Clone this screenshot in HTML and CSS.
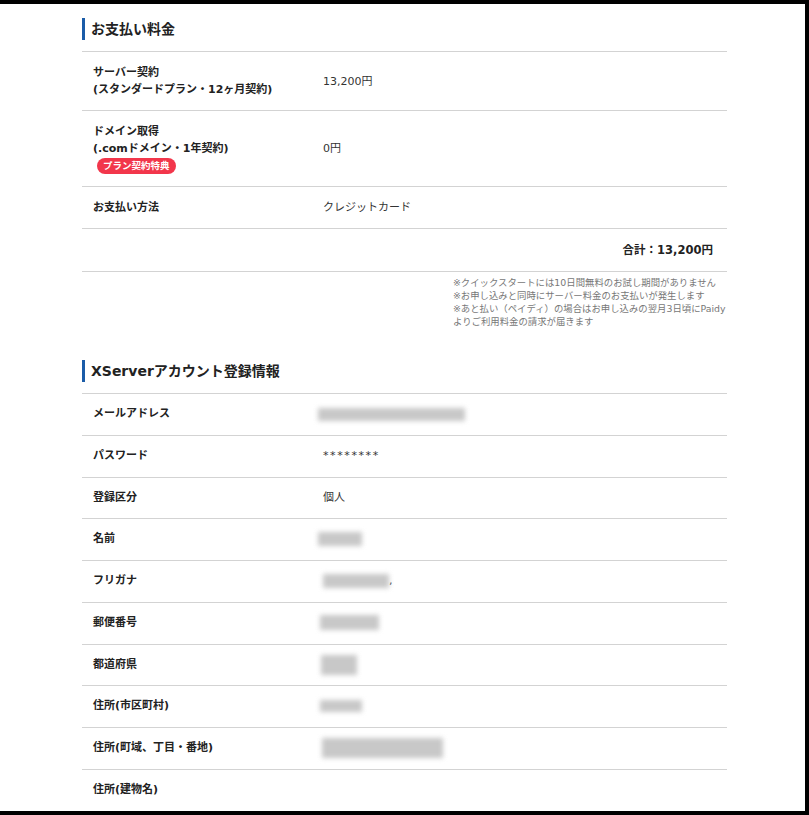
FILE: index.html
```html
<!DOCTYPE html>
<html lang="ja">
<head>
  <meta charset="UTF-8" />
  <title>お申し込み内容の確認</title>
  <link rel="stylesheet" href="styles.css">
</head>
<body>
  <div class="screen">
    <div class="content">

      <!-- お支払い料金 -->
      <h2 class="section-title">お支払い料金</h2>
      <div class="table">
        <div class="row">
          <div class="label">サーバー契約<br>(スタンダードプラン・12ヶ月契約)</div>
          <div class="value">13,200円</div>
        </div>
        <div class="row">
          <div class="label">ドメイン取得<br>(.comドメイン・1年契約)<br><span class="badge">プラン契約特典</span></div>
          <div class="value">0円</div>
        </div>
        <div class="row">
          <div class="label">お支払い方法</div>
          <div class="value">クレジットカード</div>
        </div>
        <div class="row total">
          <div class="total-text">合計：13,200円</div>
        </div>
      </div>
      <div class="notes">
        <p>※クイックスタートには10日間無料のお試し期間がありません</p>
        <p>※お申し込みと同時にサーバー料金のお支払いが発生します</p>
        <p>※あと払い（ペイディ）の場合はお申し込みの翌月3日頃にPaidy<br>よりご利用料金の請求が届きます</p>
      </div>

      <!-- アカウント情報 -->
      <h2 class="section-title second">XServerアカウント登録情報</h2>
      <div class="table account">
        <div class="row">
          <div class="label">メールアドレス</div>
          <div class="value"><span class="mask mask-email"></span></div>
        </div>
        <div class="row">
          <div class="label">パスワード</div>
          <div class="value secret">********</div>
        </div>
        <div class="row">
          <div class="label">登録区分</div>
          <div class="value">個人</div>
        </div>
        <div class="row">
          <div class="label">名前</div>
          <div class="value"><span class="mask mask-name"></span></div>
        </div>
        <div class="row">
          <div class="label">フリガナ</div>
          <div class="value"><span class="mask mask-kana"></span>,</div>
        </div>
        <div class="row">
          <div class="label">郵便番号</div>
          <div class="value"><span class="mask mask-zip"></span></div>
        </div>
        <div class="row">
          <div class="label">都道府県</div>
          <div class="value"><span class="mask mask-pref"></span></div>
        </div>
        <div class="row">
          <div class="label">住所(市区町村)</div>
          <div class="value"><span class="mask mask-city"></span></div>
        </div>
        <div class="row">
          <div class="label">住所(町域、丁目・番地)</div>
          <div class="value"><span class="mask mask-addr"></span></div>
        </div>
        <div class="row">
          <div class="label">住所(建物名)</div>
          <div class="value"></div>
        </div>
      </div>

    </div>
  </div>
</body>
</html>
```

FILE: styles.css
```css
html {
  background: #000;
}
body {
  margin: 0;
  padding: 0;
  font-family: 'DejaVu Sans', 'Noto Sans CJK JP', sans-serif;
  color: #333;
}
.screen {
  margin: 4px 4px 4px 0;
  height: 807px;
  overflow: hidden;
  background: #fff;
  padding-top: 14px;
  box-sizing: border-box;
}
.content {
  margin-left: 82px;
  width: 645px;
}
.section-title {
  margin: 0 0 11px;
  padding-left: 6px;
  border-left: 3px solid #1b5ca8;
  font-size: 14px;
  line-height: 22px;
  font-weight: bold;
  color: #222;
}
.section-title.second {
  margin-top: 32px;
}
.table {
  border-top: 1px solid #d3d3d3;
}
.row {
  display: grid;
  grid-template-columns: 230px 1fr;
  align-items: center;
  border-bottom: 1px solid #d3d3d3;
}
.label, .value {
  padding: 12px 11px;
  font-size: 11px;
  line-height: 17px;
}
.label {
  font-weight: bold;
  color: #222;
}
.account .label, .account .value {
  height: 16.75px;
  line-height: 16.75px;
}
.secret {
  letter-spacing: 1.6px;
}
.badge {
  display: inline-block;
  margin: 1px 0 0 4px;
  padding: 0 6px;
  height: 16px;
  line-height: 16px;
  border-radius: 8px;
  background: #f2364b;
  color: #fff;
  font-size: 9.5px;
  font-weight: bold;
  vertical-align: top;
}
.row.total {
  display: block;
}
.total-text {
  padding: 12px 14px 12px 0;
  text-align: right;
  font-size: 11.5px;
  line-height: 18px;
  font-weight: bold;
  color: #222;
}
.notes {
  margin-left: 371px;
  padding-top: 4px;
  font-size: 9.4px;
  line-height: 13px;
  color: #777;
  white-space: nowrap;
}
.notes p {
  margin: 0;
}
.mask {
  display: inline-block;
  vertical-align: middle;
  margin-top: -6px;
  margin-bottom: -6px;
  background: #c8c8c8;
  filter: blur(2.6px);
}
.mask-email { width: 147px; height: 13px; margin-left: -5px; }
.mask-name { width: 44px; height: 14px; margin-left: -5px; }
.mask-kana { width: 66px; height: 14px; }
.mask-zip { width: 59px; height: 15px; margin-left: -3px; }
.mask-pref { width: 36px; height: 20px; margin-left: -2px; }
.mask-city { width: 42px; height: 12px; margin-left: -3px; }
.mask-addr { width: 121px; height: 20px; margin-left: -1px; }
```
